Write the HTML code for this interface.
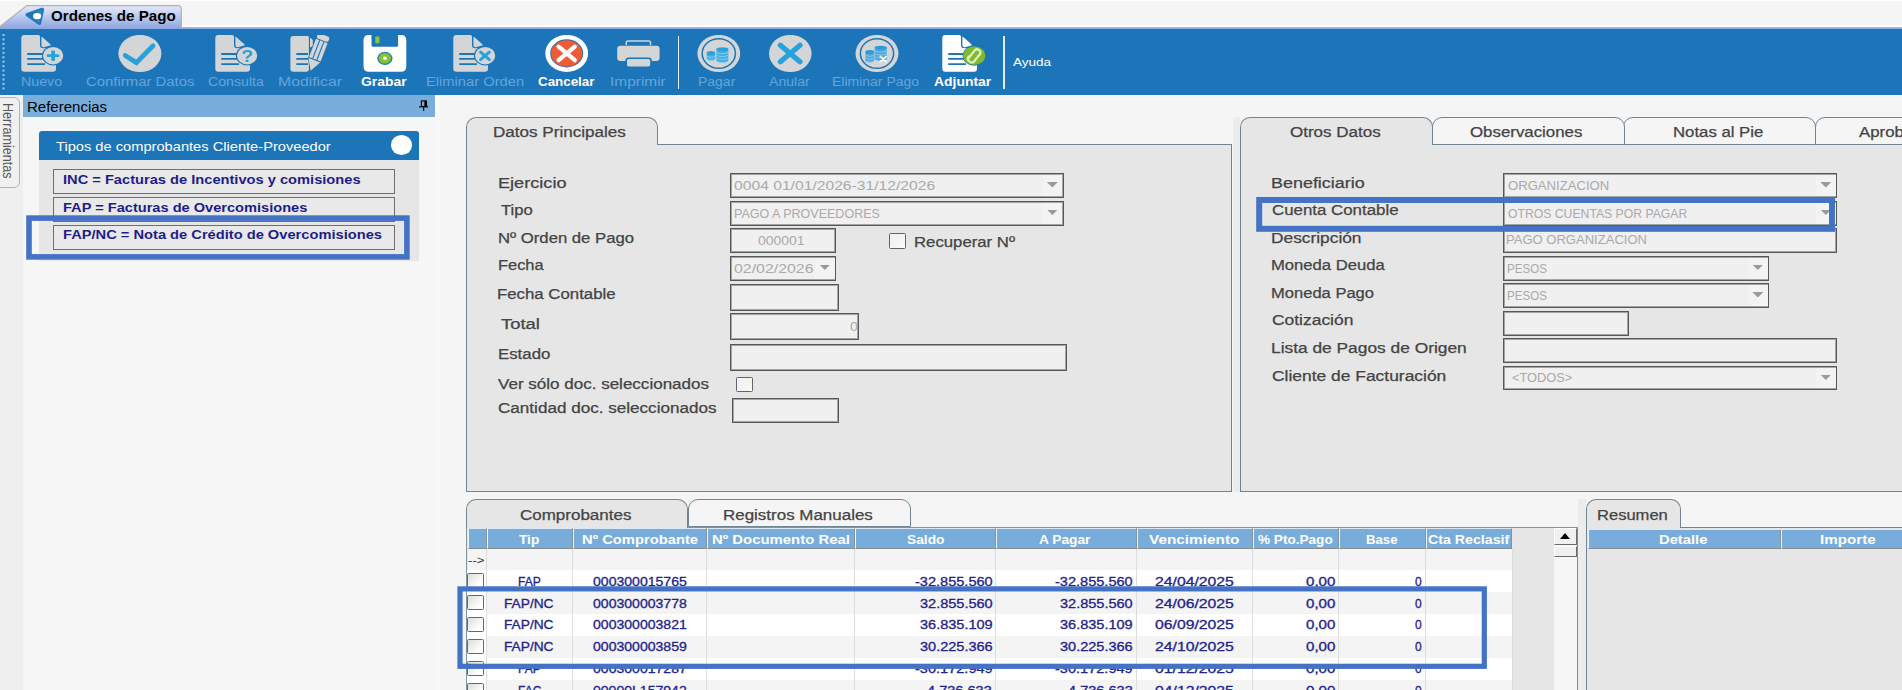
<!DOCTYPE html><html lang="es"><head><meta charset="utf-8"><title>Ordenes de Pago</title><style>
*{box-sizing:border-box;margin:0;padding:0}
html,body{width:1902px;height:690px;overflow:hidden;background:#f5f5f5}
body{position:relative;font-family:"Liberation Sans", "DejaVu Sans", sans-serif;font-size:13px;color:#3b3b3b}
.a{position:absolute;white-space:nowrap}
.t{transform-origin:0 0}
#topbar{left:0;top:0;width:1902px;height:29px;background:#f5f5f5;border-top:1.6px solid #fff}
#wtab{left:0;top:5px;width:184px;height:24px}
#toolbar{left:0;top:28px;width:1902px;height:66.5px;background:#1c75b8;border-top:1.4px solid #8fa8df}
.ti{top:35px}
.sep{top:35.5px;width:1.8px;height:53px;background:#e3ebf4}
#refhead{left:23.3px;top:95px;width:411.5px;height:22.4px;background:#79aedc}
#herr{left:-1px;top:97px;width:21px;height:91px;border:1px solid #b4b4b4;border-radius:0 6px 6px 0;background:#f0f0f0}
.inp{border:1px solid #575757;box-shadow:inset 0 0 0 1px #a4a4a4;background:#f0f0f0;overflow:hidden}
.grp{background:#e6e6e6;border:1px solid #6f8592}
.tab{background:#e6e6e6;border:1px solid #6f8592;border-bottom:none;border-radius:10px 10px 0 0}
.tab.u{background:#f5f5f5;border-bottom:1px solid #6f8592}
.dd{width:20px;background:#f3f3f3}
.dd:after{content:"";position:absolute;left:4.8px;top:7px;width:11px;height:5.6px;background:#9a9a9a;clip-path:polygon(0 0,100% 0,50% 100%)}
.gh{background:#78addb;border-left:1px solid #eef4fa;border-top:1px solid #dbe8f4;border-right:1px solid #8a9096;border-bottom:1px solid #858c92}
.cb.fc{border:1.7px solid #5a6672;background:linear-gradient(135deg,#eef1f3,#f7f3f0 60%,#fbfbfb)}
.cb{border:1.5px solid #41709a;border-radius:1.5px;background:linear-gradient(135deg,#dcdcd8,#ffffff 75%)}
</style></head><body>
<div class="a" id="topbar"></div>
<svg class="a" id="wtab" viewBox="0 0 184 24"><defs><linearGradient id="tg" x1="0" y1="0" x2="0" y2="1"><stop offset="0" stop-color="#e3eafa"/><stop offset="0.45" stop-color="#bccbf0"/><stop offset="1" stop-color="#8ca5e1"/></linearGradient><linearGradient id="lg" x1="0" y1="0" x2="1" y2="0"><stop offset="0" stop-color="#1b6aab"/><stop offset="1" stop-color="#2c8ec6"/></linearGradient></defs>
<path d="M-1 24 V22.2 L26.8 0.6 H177.5 Q181.3 0.6 181.3 4.4 V24 Z" fill="url(#tg)" stroke="#b0b0b0" stroke-width="1.2"/>
<path d="M27.4 9.8 L42.2 4.6 L39.3 18 Z" fill="url(#lg)" stroke="#2279b6" stroke-width="3.8" stroke-linejoin="round"/><path d="M27.4 9.8 L42.2 4.6 L39.3 18 Z" fill="url(#lg)"/><ellipse cx="37.1" cy="11.1" rx="4.1" ry="3.2" fill="#fff"/></svg>
<div class="a t" style="left:50.60px;top:7.05px;font-size:14px;line-height:18px;color:#000;transform:scaleX(1.0838);font-weight:bold;">Ordenes de Pago</div>
<div class="a" style="left:182px;top:25.4px;width:1720px;height:1.8px;background:#fff"></div><div class="a" style="left:182px;top:27px;width:1720px;height:1px;background:#b4b4b4"></div>
<div class="a" id="toolbar"></div>
<svg class="a" style="left:2px;top:33px" width="4" height="58" viewBox="0 0 4 58"><rect x="0.5" y="1.00" width="2" height="2" fill="#a5c6e6"/><rect x="0.5" y="5.45" width="2" height="2" fill="#a5c6e6"/><rect x="0.5" y="9.90" width="2" height="2" fill="#a5c6e6"/><rect x="0.5" y="14.35" width="2" height="2" fill="#a5c6e6"/><rect x="0.5" y="18.80" width="2" height="2" fill="#a5c6e6"/><rect x="0.5" y="23.25" width="2" height="2" fill="#a5c6e6"/><rect x="0.5" y="27.70" width="2" height="2" fill="#a5c6e6"/><rect x="0.5" y="32.15" width="2" height="2" fill="#a5c6e6"/><rect x="0.5" y="36.60" width="2" height="2" fill="#a5c6e6"/><rect x="0.5" y="41.05" width="2" height="2" fill="#a5c6e6"/><rect x="0.5" y="45.50" width="2" height="2" fill="#a5c6e6"/><rect x="0.5" y="49.95" width="2" height="2" fill="#a5c6e6"/><rect x="0.5" y="54.40" width="2" height="2" fill="#a5c6e6"/></svg>
<div class="a ti" style="left:21px"><svg width="46" height="38" viewBox="0 0 46 38">
<path d="M3.3 0 H17.3 Q19 0 19 1.7 V10 Q19 13.2 22.2 13.2 H35 V33.8 Q35 36.8 32 36.8 H3.3 Q0.3 36.8 0.3 33.8 V3 Q0.3 0 3.3 0 Z" fill="#d4d5d7"/>
<path d="M20.4 2.6 Q20.4 1.2 21.5 2.2 L29.6 9.4 Q30.4 10.3 29.2 10.6 L23 12.3 Q20.4 12.6 20.4 10 Z" fill="#d4d5d7"/>
<path d="M6.2 19 H24 M6.2 23.9 H24 M6.2 29.1 H24" stroke="#1c75b8" stroke-width="1.8"/>
<ellipse cx="32.1" cy="20.7" rx="11.2" ry="9.7" fill="#1c75b8"/>
<ellipse cx="32.1" cy="20.7" rx="10.1" ry="8.7" fill="#d4d5d7"/>
<rect x="25.7" y="19.3" width="12.8" height="2.8" rx="1.3" fill="#27a3dc"/><rect x="30.2" y="15.4" width="3.8" height="10.6" rx="1.3" fill="#27a3dc"/>
</svg></div>
<div class="a t" style="left:20.86px;top:73.57px;font-size:12.5px;line-height:16px;color:#64a5dc;transform:scaleX(1.1370);">Nuevo</div>
<div class="a ti" style="left:118px"><svg width="46" height="38" viewBox="0 0 46 38">
<ellipse cx="21.9" cy="18.5" rx="21.5" ry="18.6" fill="#d4d5d7"/>
<path d="M7.2 20.4 L18.4 27.6 L35 10.8" stroke="#27a3dc" stroke-width="4.8" fill="none" stroke-linecap="round" stroke-linejoin="miter"/>
</svg></div>
<div class="a t" style="left:85.80px;top:73.57px;font-size:12.5px;line-height:16px;color:#64a5dc;transform:scaleX(1.1923);">Confirmar Datos</div>
<div class="a ti" style="left:215px"><svg width="46" height="38" viewBox="0 0 46 38">
<path d="M3.3 0 H17.3 Q19 0 19 1.7 V10 Q19 13.2 22.2 13.2 H35 V33.8 Q35 36.8 32 36.8 H3.3 Q0.3 36.8 0.3 33.8 V3 Q0.3 0 3.3 0 Z" fill="#d4d5d7"/>
<path d="M20.4 2.6 Q20.4 1.2 21.5 2.2 L29.6 9.4 Q30.4 10.3 29.2 10.6 L23 12.3 Q20.4 12.6 20.4 10 Z" fill="#d4d5d7"/>
<path d="M6.2 19 H24 M6.2 23.9 H24 M6.2 29.1 H24" stroke="#1c75b8" stroke-width="1.8"/>
<ellipse cx="32.1" cy="20.7" rx="11.2" ry="9.7" fill="#1c75b8"/>
<ellipse cx="32.1" cy="20.7" rx="10.1" ry="8.7" fill="#d4d5d7"/>
<text x="0" y="0" transform="translate(32.1 26.6) scale(1.15 1)" font-family="Liberation Sans, sans-serif" font-weight="bold" font-size="17" fill="#27a3dc" text-anchor="middle">?</text>
</svg></div>
<div class="a t" style="left:208.00px;top:73.57px;font-size:12.5px;line-height:16px;color:#64a5dc;transform:scaleX(1.1340);">Consulta</div>
<div class="a ti" style="left:288px"><svg width="46" height="38" viewBox="0 0 46 38">
<path d="M5.4 0.9 H19.5 Q20.9 0.9 20.9 2.3 V34 Q20.9 36.8 18 36.8 H5.4 Q2.4 36.8 2.4 33.8 V3.9 Q2.4 0.9 5.4 0.9 Z" fill="#d4d5d7"/>
<path d="M22 3.6 Q22 2.6 23 3.3 L24.8 5 L24.8 11 L22 12.4 Z" fill="#d4d5d7"/>
<path d="M8.3 19 H20 M8.3 23.9 H20 M8.3 29.1 H20" stroke="#1c75b8" stroke-width="1.8"/>
<g transform="translate(35.5,1.6) rotate(21)" stroke="#1c75b8" stroke-width="1.2" paint-order="stroke">
<rect x="-6.2" y="-1.6" width="12.4" height="5.4" rx="2" fill="#d4d5d7"/>
<rect x="-6.2" y="4.8" width="12.4" height="19.4" fill="#d4d5d7"/>
<path d="M-6.2 25.4 H6.2 L0.2 36.4 Z" fill="#d4d5d7"/>
<path d="M-2.2 4.8 V24.2 M2.2 4.8 V24.2" stroke="#1c75b8" stroke-width="1.1"/>
</g>
</svg></div>
<div class="a t" style="left:277.74px;top:73.57px;font-size:12.5px;line-height:16px;color:#64a5dc;transform:scaleX(1.2615);">Modificar</div>
<div class="a ti" style="left:362.5px"><svg width="46" height="38" viewBox="0 0 46 38">
<path d="M6 -0.1 H8.5 V10.2 Q8.5 11.7 10 11.7 H33.6 Q35.1 11.7 35.1 10.2 V-0.1 H37.8 Q43.3 -0.1 43.3 5.4 V31.3 Q43.3 36.8 37.8 36.8 H6 Q0.5 36.8 0.5 31.3 V5.4 Q0.5 -0.1 6 -0.1 Z" fill="#ffffff"/>
<rect x="12.3" y="1.6" width="4.2" height="6.6" rx="0.8" fill="#8cc63f"/>
<ellipse cx="21.9" cy="23.3" rx="7.6" ry="6.6" fill="#2a7fae"/>
<ellipse cx="21.9" cy="23.3" rx="6.2" ry="5.3" fill="#86c232"/>
<ellipse cx="21.9" cy="23.3" rx="2" ry="1.7" fill="#ffffff"/>
</svg></div>
<div class="a t" style="left:360.70px;top:73.57px;font-size:12.5px;line-height:16px;color:#ffffff;transform:scaleX(1.1136);font-weight:bold;">Grabar</div>
<div class="a ti" style="left:453.4px"><svg width="46" height="38" viewBox="0 0 46 38">
<path d="M3.3 0 H17.3 Q19 0 19 1.7 V10 Q19 13.2 22.2 13.2 H35 V33.8 Q35 36.8 32 36.8 H3.3 Q0.3 36.8 0.3 33.8 V3 Q0.3 0 3.3 0 Z" fill="#d4d5d7"/>
<path d="M20.4 2.6 Q20.4 1.2 21.5 2.2 L29.6 9.4 Q30.4 10.3 29.2 10.6 L23 12.3 Q20.4 12.6 20.4 10 Z" fill="#d4d5d7"/>
<path d="M6.2 19 H24 M6.2 23.9 H24 M6.2 29.1 H24" stroke="#1c75b8" stroke-width="1.8"/>
<ellipse cx="32.1" cy="20.7" rx="11.2" ry="9.7" fill="#1c75b8"/>
<ellipse cx="32.1" cy="20.7" rx="10.1" ry="8.7" fill="#d4d5d7"/>
<path d="M27.6 17.2 L36.4 24.6 M36.4 17.2 L27.6 24.6" stroke="#27a3dc" stroke-width="3" stroke-linecap="round"/>
</svg></div>
<div class="a t" style="left:425.82px;top:73.57px;font-size:12.5px;line-height:16px;color:#64a5dc;transform:scaleX(1.1770);">Eliminar Orden</div>
<div class="a ti" style="left:544px"><svg width="46" height="38" viewBox="0 0 46 38">
<ellipse cx="22.7" cy="18.4" rx="21.4" ry="18.5" fill="#ffffff"/>
<ellipse cx="22.7" cy="18.4" rx="16.5" ry="14.1" fill="#1c75b8"/>
<ellipse cx="22.7" cy="18.4" rx="15.6" ry="13.2" fill="#ef5b35"/>
<path d="M14.6 11.6 L30.8 25.2 M30.8 11.6 L14.6 25.2" stroke="#ffffff" stroke-width="4.2" stroke-linecap="round"/>
</svg></div>
<div class="a t" style="left:538.40px;top:73.57px;font-size:12.5px;line-height:16px;color:#ffffff;transform:scaleX(1.0691);font-weight:bold;">Cancelar</div>
<div class="a ti" style="left:617px"><svg width="46" height="38" viewBox="0 0 46 38">
<path d="M9.3 10 V7.6 Q9.3 6 11 6 H31.8 Q33.5 6 33.5 7.6 V10" fill="none" stroke="#d4d5d7" stroke-width="1.5"/>
<rect x="0.2" y="10.7" width="42.4" height="15.3" rx="3.2" fill="#d4d5d7"/>
<rect x="9.2" y="23.2" width="24.8" height="9" rx="2.4" fill="#d4d5d7" stroke="#1c75b8" stroke-width="1.6"/>
</svg></div>
<div class="a t" style="left:610.06px;top:73.57px;font-size:12.5px;line-height:16px;color:#64a5dc;transform:scaleX(1.2350);">Imprimir</div>
<div class="a ti" style="left:696.5px"><svg width="46" height="38" viewBox="0 0 46 38">
<ellipse cx="21.8" cy="18.5" rx="21.4" ry="18.6" fill="#d4d5d7"/>
<ellipse cx="21.8" cy="18.5" rx="16.6" ry="14.8" fill="none" stroke="#1c75b8" stroke-width="1.5"/>
<ellipse cx="14" cy="23.80" rx="4.3" ry="1.9" fill="#43ade2"/><rect x="9.7" y="18.00" width="8.6" height="5.80" fill="#43ade2"/><path d="M9.7 20.60 A4.3 1.9 0 0 0 18.3 20.60" fill="none" stroke="#bfe0f3" stroke-width="0.55"/><path d="M9.7 23.50 A4.3 1.9 0 0 0 18.3 23.50" fill="none" stroke="#bfe0f3" stroke-width="0.55"/><ellipse cx="14" cy="18.00" rx="4.3" ry="1.9" fill="#27a3dc"/>
<ellipse cx="25.4" cy="25.80" rx="6" ry="1.9" fill="#43ade2"/><rect x="19.4" y="14.20" width="12" height="11.60" fill="#43ade2"/><path d="M19.4 16.80 A6 1.9 0 0 0 31.4 16.80" fill="none" stroke="#bfe0f3" stroke-width="0.55"/><path d="M19.4 19.70 A6 1.9 0 0 0 31.4 19.70" fill="none" stroke="#bfe0f3" stroke-width="0.55"/><path d="M19.4 22.60 A6 1.9 0 0 0 31.4 22.60" fill="none" stroke="#bfe0f3" stroke-width="0.55"/><path d="M19.4 25.50 A6 1.9 0 0 0 31.4 25.50" fill="none" stroke="#bfe0f3" stroke-width="0.55"/><ellipse cx="25.4" cy="14.20" rx="6" ry="1.9" fill="#27a3dc"/>
</svg></div>
<div class="a t" style="left:697.88px;top:73.57px;font-size:12.5px;line-height:16px;color:#64a5dc;transform:scaleX(1.1183);">Pagar</div>
<div class="a ti" style="left:768px"><svg width="46" height="38" viewBox="0 0 46 38">
<ellipse cx="22.3" cy="18.5" rx="21.3" ry="18.6" fill="#d4d5d7"/>
<path d="M12.4 10.2 L32 26.8 M32 10.2 L12.4 26.8" stroke="#27a3dc" stroke-width="5.2" stroke-linecap="round"/>
</svg></div>
<div class="a t" style="left:769.00px;top:73.57px;font-size:12.5px;line-height:16px;color:#64a5dc;transform:scaleX(1.1287);">Anular</div>
<div class="a ti" style="left:854.5px"><svg width="46" height="38" viewBox="0 0 46 38">
<ellipse cx="22" cy="18.5" rx="21.5" ry="18.6" fill="#d4d5d7"/>
<ellipse cx="22" cy="18.5" rx="16.6" ry="14.8" fill="none" stroke="#1c75b8" stroke-width="1.5"/>
<ellipse cx="14.8" cy="25.50" rx="4.4" ry="1.9" fill="#4aa6dc"/><rect x="10.4" y="16.80" width="8.8" height="8.70" fill="#4aa6dc"/><path d="M10.4 19.40 A4.4 1.9 0 0 0 19.200000000000003 19.40" fill="none" stroke="#bfe0f3" stroke-width="0.55"/><path d="M10.4 22.30 A4.4 1.9 0 0 0 19.200000000000003 22.30" fill="none" stroke="#bfe0f3" stroke-width="0.55"/><path d="M10.4 25.20 A4.4 1.9 0 0 0 19.200000000000003 25.20" fill="none" stroke="#bfe0f3" stroke-width="0.55"/><ellipse cx="14.8" cy="16.80" rx="4.4" ry="1.9" fill="#2e9bd6"/>
<ellipse cx="25.7" cy="24.20" rx="6.1" ry="1.9" fill="#4aa6dc"/><rect x="19.6" y="12.60" width="12.2" height="11.60" fill="#4aa6dc"/><path d="M19.6 15.20 A6.1 1.9 0 0 0 31.799999999999997 15.20" fill="none" stroke="#bfe0f3" stroke-width="0.55"/><path d="M19.6 18.10 A6.1 1.9 0 0 0 31.799999999999997 18.10" fill="none" stroke="#bfe0f3" stroke-width="0.55"/><path d="M19.6 21.00 A6.1 1.9 0 0 0 31.799999999999997 21.00" fill="none" stroke="#bfe0f3" stroke-width="0.55"/><path d="M19.6 23.90 A6.1 1.9 0 0 0 31.799999999999997 23.90" fill="none" stroke="#bfe0f3" stroke-width="0.55"/><ellipse cx="25.7" cy="12.60" rx="6.1" ry="1.9" fill="#2e9bd6"/>
<path d="M25.4 21.6 L31 26.6 M31 21.6 L25.4 26.6" stroke="#ffffff" stroke-width="1.9" stroke-linecap="round"/>
</svg></div>
<div class="a t" style="left:831.88px;top:73.57px;font-size:12.5px;line-height:16px;color:#64a5dc;transform:scaleX(1.1189);">Eliminar Pago</div>
<div class="a ti" style="left:941.5px"><svg width="46" height="38" viewBox="0 0 46 38">
<path d="M3.3 0 H17.3 Q19 0 19 1.7 V10 Q19 13.2 22.2 13.2 H35 V33.8 Q35 36.8 32 36.8 H3.3 Q0.3 36.8 0.3 33.8 V3 Q0.3 0 3.3 0 Z" fill="#ffffff"/>
<path d="M20.4 2.6 Q20.4 1.2 21.5 2.2 L29.6 9.4 Q30.4 10.3 29.2 10.6 L23 12.3 Q20.4 12.6 20.4 10 Z" fill="#ffffff"/>
<path d="M6.2 19 H24 M6.2 23.9 H24 M6.2 29.1 H24" stroke="#1c75b8" stroke-width="1.8"/>
<ellipse cx="32.2" cy="20.7" rx="11.6" ry="10" fill="#1c75b8"/>
<ellipse cx="32.2" cy="20.7" rx="11" ry="9.4" fill="#7fba2c"/>
<g transform="translate(32.2,20.7) rotate(38) scale(1.1 1)">
<path d="M-2.6 5 V-4.2 Q-2.6 -7.4 0.3 -7.4 Q3.2 -7.4 3.2 -4.2 V4 Q3.2 7.6 0 7.6 Q-3.4 7.6 -3.4 4" stroke="#d9efbc" stroke-width="2.2" fill="none" stroke-linecap="round"/>
<path d="M0.3 -3.5 V3.6" stroke="#7fba2c" stroke-width="0.9"/>
</g>
</svg></div>
<div class="a t" style="left:934.40px;top:73.57px;font-size:12.5px;line-height:16px;color:#ffffff;transform:scaleX(1.1141);font-weight:bold;">Adjuntar</div>
<div class="a sep" style="left:677.6px"></div><div class="a sep" style="left:1002.8px"></div>
<div class="a t" style="left:1012.80px;top:54.69px;font-size:11px;line-height:14px;color:#ffffff;transform:scaleX(1.2299);">Ayuda</div>
<div class="a" style="left:0;top:95px;width:434.8px;height:595px;background:#f6f6f6"></div><div class="a" style="left:434.8px;top:95px;width:5.5px;height:595px;background:#f8f8f8"></div>
<div class="a" style="left:0;top:95px;width:22.6px;height:595px;background:#efefef"></div>
<div class="a" id="herr"></div>
<div class="a" style="left:16.9px;top:102.63px;font-size:13px;color:#5a5a5a;transform-origin:0 0;transform:scale(1.16,1) rotate(90deg) scale(0.9674,1);line-height:16px">Herramientas</div>
<div class="a" id="refhead"></div>
<div class="a t" style="left:26.93px;top:98.15px;font-size:14px;line-height:18px;color:#000;transform:scaleX(1.0719);">Referencias</div>
<svg class="a" style="left:419px;top:100px" width="10" height="12" viewBox="0 0 10 12"><rect x="2.4" y="0.9" width="4.9" height="5.6" fill="none" stroke="#000" stroke-width="1.1"/><rect x="5.4" y="0.9" width="2.2" height="5.6" fill="#000"/><rect x="0.1" y="6.2" width="9" height="1.2" fill="#000"/><rect x="4.1" y="7.2" width="1.1" height="3.8" fill="#000"/></svg>
<div class="a" style="left:38.5px;top:131px;width:380.5px;height:129.6px;background:#e6e6e6;border-radius:3px 3px 0 0"></div>
<div class="a" style="left:38.5px;top:131px;width:380.5px;height:28.8px;background:#1c75b8;border-radius:3px 3px 0 0"></div>
<div class="a t" style="left:56.30px;top:138.30px;font-size:13px;line-height:17px;color:#ffffff;transform:scaleX(1.1271);">Tipos de comprobantes Cliente-Proveedor</div>
<div class="a" style="left:391.3px;top:135px;width:21.2px;height:19.6px;border-radius:50%;background:#fff"></div>
<div class="a" style="left:53px;top:169.3px;width:342px;height:25px;border:1.5px solid #6e6e6e;background:#e9e9e9"></div>
<div class="a t" style="left:62.60px;top:172.17px;font-size:12.5px;line-height:16px;color:#1d1d8a;transform:scaleX(1.1719);font-weight:bold;">INC = Facturas de Incentivos y comisiones</div>
<div class="a" style="left:53px;top:197.1px;width:342px;height:25px;border:1.5px solid #6e6e6e;background:#e9e9e9"></div>
<div class="a t" style="left:62.60px;top:199.72px;font-size:12.5px;line-height:16px;color:#1d1d8a;transform:scaleX(1.1675);font-weight:bold;">FAP = Facturas de Overcomisiones</div>
<div class="a" style="left:53px;top:224.9px;width:342px;height:25px;border:1.5px solid #6e6e6e;background:#e9e9e9"></div>
<div class="a t" style="left:62.60px;top:227.27px;font-size:12.5px;line-height:16px;color:#1d1d8a;transform:scaleX(1.1728);font-weight:bold;">FAP/NC = Nota de Crédito de Overcomisiones</div>
<svg class="a" style="left:25px;top:214px" width="386" height="47" viewBox="0 0 386 47"><rect x="4.00" y="4.10" width="377.90" height="38.80" fill="none" stroke="#4472c4" stroke-width="5.6"/></svg>
<div class="a grp" style="left:466px;top:144px;width:766px;height:348px"></div>
<div class="a tab" style="left:466px;top:117px;width:192px;height:28px"></div>
<div class="a t" style="left:493.18px;top:123.15px;font-size:14px;line-height:18px;color:#444444;transform:scaleX(1.2192);-webkit-text-stroke:0.25px #444;">Datos Principales</div>
<div class="a t" style="left:497.70px;top:174.05px;font-size:14px;line-height:18px;color:#444444;transform:scaleX(1.2952);-webkit-text-stroke:0.25px #444;">Ejercicio</div>
<div class="a t" style="left:501.30px;top:201.35px;font-size:14px;line-height:18px;color:#444444;transform:scaleX(1.1883);-webkit-text-stroke:0.25px #444;">Tipo</div>
<div class="a t" style="left:497.81px;top:228.65px;font-size:14px;line-height:18px;color:#444444;transform:scaleX(1.1926);-webkit-text-stroke:0.25px #444;">Nº Orden de Pago</div>
<div class="a t" style="left:497.83px;top:256.05px;font-size:14px;line-height:18px;color:#444444;transform:scaleX(1.1725);-webkit-text-stroke:0.25px #444;">Fecha</div>
<div class="a t" style="left:496.60px;top:284.65px;font-size:14px;line-height:18px;color:#444444;transform:scaleX(1.1993);-webkit-text-stroke:0.25px #444;">Fecha Contable</div>
<div class="a t" style="left:500.50px;top:314.75px;font-size:14px;line-height:18px;color:#444444;transform:scaleX(1.3170);-webkit-text-stroke:0.25px #444;">Total</div>
<div class="a t" style="left:497.90px;top:344.55px;font-size:14px;line-height:18px;color:#444444;transform:scaleX(1.2009);-webkit-text-stroke:0.25px #444;">Estado</div>
<div class="a t" style="left:497.70px;top:374.65px;font-size:14px;line-height:18px;color:#444444;transform:scaleX(1.2158);-webkit-text-stroke:0.25px #444;">Ver sólo doc. seleccionados</div>
<div class="a t" style="left:498.10px;top:398.95px;font-size:14px;line-height:18px;color:#444444;transform:scaleX(1.2206);-webkit-text-stroke:0.25px #444;">Cantidad doc. seleccionados</div>
<div class="a inp" style="left:730px;top:173px;width:333.5px;height:25px"><div class="a dd" style="left:311.0px;top:1px;height:21px"></div></div>
<div class="a t" style="left:734.00px;top:177.00px;font-size:13px;line-height:17px;color:#a9a9a9;transform:scaleX(1.2047);">0004 01/01/2026-31/12/2026</div>
<div class="a inp" style="left:730px;top:200.5px;width:333.5px;height:25px"><div class="a dd" style="left:311.0px;top:1px;height:21px"></div></div>
<div class="a t" style="left:733.64px;top:204.50px;font-size:13px;line-height:17px;color:#a9a9a9;transform:scaleX(0.9630);">PAGO A PROVEEDORES</div>
<div class="a inp" style="left:730px;top:228px;width:106px;height:25px"></div>
<div class="a t" style="left:758.10px;top:232.00px;font-size:13px;line-height:17px;color:#a9a9a9;transform:scaleX(1.0753);">000001</div>
<div class="a inp" style="left:730px;top:255.5px;width:106px;height:25px"><div class="a dd" style="left:83.5px;top:1px;height:21px"></div></div>
<div class="a t" style="left:733.50px;top:259.50px;font-size:13px;line-height:17px;color:#a9a9a9;transform:scaleX(1.2216);">02/02/2026</div>
<div class="a inp" style="left:730px;top:283.5px;width:109px;height:27px"></div>
<div class="a inp" style="left:730px;top:313px;width:129px;height:27px"></div>
<div class="a t" style="left:849.70px;top:318.00px;font-size:13px;line-height:17px;color:#a9a9a9;transform:scaleX(1.0857);">0</div>
<div class="a inp" style="left:730px;top:344px;width:337px;height:27px"></div>
<div class="a inp" style="left:731.5px;top:398px;width:107px;height:25px"></div>
<div class="a cb fc" style="left:735.6px;top:376.6px;width:17.6px;height:15.2px"></div>
<div class="a cb fc" style="left:888.5px;top:233.3px;width:17.6px;height:15.4px"></div>
<div class="a t" style="left:914.00px;top:233.45px;font-size:14px;line-height:18px;color:#444444;transform:scaleX(1.1959);-webkit-text-stroke:0.25px #444;">Recuperar Nº</div>
<div class="a" style="left:1233px;top:117px;width:7px;height:375px;background:#ececec"></div>
<div class="a grp" style="left:1240px;top:144px;width:700px;height:348px"></div>
<div class="a tab u" style="left:1815px;top:117px;width:193px;height:28px"></div>
<div class="a t" style="left:1859.00px;top:123.15px;font-size:14px;line-height:18px;color:#444444;transform:scaleX(1.2000);-webkit-text-stroke:0.25px #444;">Aprobaciones</div>
<div class="a tab u" style="left:1623px;top:117px;width:193px;height:28px"></div>
<div class="a t" style="left:1673.00px;top:123.15px;font-size:14px;line-height:18px;color:#444444;transform:scaleX(1.1968);-webkit-text-stroke:0.25px #444;">Notas al Pie</div>
<div class="a tab u" style="left:1431.5px;top:117px;width:193px;height:28px"></div>
<div class="a t" style="left:1470.30px;top:123.15px;font-size:14px;line-height:18px;color:#444444;transform:scaleX(1.2037);-webkit-text-stroke:0.25px #444;">Observaciones</div>
<div class="a tab " style="left:1240px;top:117px;width:193px;height:28px"></div>
<div class="a t" style="left:1289.70px;top:123.15px;font-size:14px;line-height:18px;color:#444444;transform:scaleX(1.2144);-webkit-text-stroke:0.25px #444;">Otros Datos</div>
<div class="a t" style="left:1270.72px;top:174.05px;font-size:14px;line-height:18px;color:#444444;transform:scaleX(1.2810);-webkit-text-stroke:0.25px #444;">Beneficiario</div>
<div class="a t" style="left:1272.40px;top:201.35px;font-size:14px;line-height:18px;color:#444444;transform:scaleX(1.2043);-webkit-text-stroke:0.25px #444;">Cuenta Contable</div>
<div class="a t" style="left:1270.76px;top:228.65px;font-size:14px;line-height:18px;color:#444444;transform:scaleX(1.2375);-webkit-text-stroke:0.25px #444;">Descripción</div>
<div class="a t" style="left:1270.81px;top:256.05px;font-size:14px;line-height:18px;color:#444444;transform:scaleX(1.1880);-webkit-text-stroke:0.25px #444;">Moneda Deuda</div>
<div class="a t" style="left:1270.82px;top:283.55px;font-size:14px;line-height:18px;color:#444444;transform:scaleX(1.1818);-webkit-text-stroke:0.25px #444;">Moneda Pago</div>
<div class="a t" style="left:1272.40px;top:311.25px;font-size:14px;line-height:18px;color:#444444;transform:scaleX(1.2450);-webkit-text-stroke:0.25px #444;">Cotización</div>
<div class="a t" style="left:1270.76px;top:338.95px;font-size:14px;line-height:18px;color:#444444;transform:scaleX(1.2387);-webkit-text-stroke:0.25px #444;">Lista de Pagos de Origen</div>
<div class="a t" style="left:1272.40px;top:366.65px;font-size:14px;line-height:18px;color:#444444;transform:scaleX(1.2442);-webkit-text-stroke:0.25px #444;">Cliente de Facturación</div>
<div class="a inp" style="left:1503px;top:173px;width:334px;height:25px"><div class="a dd" style="left:311.5px;top:1px;height:21px"></div></div>
<div class="a t" style="left:1508.00px;top:177.00px;font-size:13px;line-height:17px;color:#a9a9a9;transform:scaleX(1.0079);">ORGANIZACION</div>
<div class="a inp" style="left:1503px;top:200.5px;width:334px;height:25px"><div class="a dd" style="left:311.5px;top:1px;height:21px"></div></div>
<div class="a t" style="left:1508.00px;top:204.50px;font-size:13px;line-height:17px;color:#a9a9a9;transform:scaleX(0.9389);">OTROS CUENTAS POR PAGAR</div>
<div class="a inp" style="left:1503px;top:228px;width:334px;height:25px"></div>
<div class="a t" style="left:1505.70px;top:230.90px;font-size:13px;line-height:17px;color:#a9a9a9;transform:scaleX(1.0027);">PAGO ORGANIZACION</div>
<div class="a inp" style="left:1503px;top:255.5px;width:266px;height:25px"><div class="a dd" style="left:243.5px;top:1px;height:21px"></div></div>
<div class="a t" style="left:1507.11px;top:259.50px;font-size:13px;line-height:17px;color:#a9a9a9;transform:scaleX(0.8907);">PESOS</div>
<div class="a inp" style="left:1503px;top:283px;width:266px;height:25px"><div class="a dd" style="left:243.5px;top:1px;height:21px"></div></div>
<div class="a t" style="left:1507.11px;top:287.00px;font-size:13px;line-height:17px;color:#a9a9a9;transform:scaleX(0.8907);">PESOS</div>
<div class="a inp" style="left:1503px;top:311px;width:126px;height:25px"></div>
<div class="a inp" style="left:1503px;top:338px;width:334px;height:25px"></div>
<div class="a inp" style="left:1503px;top:365.5px;width:334px;height:24.5px"><div class="a dd" style="left:311.5px;top:1px;height:20.5px"></div></div>
<div class="a t" style="left:1512.00px;top:369.00px;font-size:13px;line-height:17px;color:#a9a9a9;transform:scaleX(0.9855);">&lt;TODOS&gt;</div>
<svg class="a" style="left:1255px;top:196px" width="581" height="37" viewBox="0 0 581 37"><rect x="4.20" y="4.00" width="572.80" height="28.80" fill="none" stroke="#4472c4" stroke-width="6"/></svg>
<div class="a" style="left:466px;top:527px;width:1112px;height:170px;background:#e6e6e6;border-left:1px solid #8096a2;border-top:1px solid #8096a2"></div>
<div class="a tab u" style="left:688px;top:499px;width:223px;height:28px"></div>
<div class="a tab" style="left:466px;top:499px;width:222px;height:29px"></div>
<div class="a t" style="left:520.30px;top:506.15px;font-size:14px;line-height:18px;color:#444444;transform:scaleX(1.2131);-webkit-text-stroke:0.25px #444;">Comprobantes</div>
<div class="a t" style="left:722.59px;top:506.15px;font-size:14px;line-height:18px;color:#444444;transform:scaleX(1.2109);-webkit-text-stroke:0.25px #444;">Registros Manuales</div>
<div class="a" style="left:468px;top:549px;width:1044px;height:141px;background:#fff"></div>
<div class="a" style="left:468px;top:548.5px;width:1044px;height:21.7px;background:#f4f4f4"></div>
<div class="a" style="left:468px;top:592.1px;width:1044px;height:21.9px;background:#f4f4f4"></div>
<div class="a" style="left:468px;top:635.9px;width:1044px;height:21.9px;background:#f4f4f4"></div>
<div class="a" style="left:468px;top:679.7px;width:1044px;height:21.9px;background:#f4f4f4"></div>
<div class="a" style="left:467px;top:570.3px;width:19.5px;height:120px;background:#fff"></div>
<div class="a gh" style="left:468px;top:528px;width:18.5px;height:20.5px;overflow:hidden"></div>
<div class="a gh" style="left:486.5px;top:528px;width:86.0px;height:20.5px;overflow:hidden"><div class="a t" style="left:31.40px;top:2.57px;font-size:12.5px;line-height:16px;color:#fff;transform:scaleX(1.0962);font-weight:bold;">Tip</div></div>
<div class="a" style="left:485.8px;top:549px;width:1px;height:141px;background:#dedede"></div>
<div class="a gh" style="left:572.5px;top:528px;width:134.0px;height:20.5px;overflow:hidden"><div class="a t" style="left:8.30px;top:2.57px;font-size:12.5px;line-height:16px;color:#fff;transform:scaleX(1.1803);font-weight:bold;">Nº Comprobante</div></div>
<div class="a" style="left:571.8px;top:549px;width:1px;height:141px;background:#dedede"></div>
<div class="a gh" style="left:706.5px;top:528px;width:148.0px;height:20.5px;overflow:hidden"><div class="a t" style="left:4.50px;top:2.57px;font-size:12.5px;line-height:16px;color:#fff;transform:scaleX(1.1916);font-weight:bold;">Nº Documento Real</div></div>
<div class="a" style="left:705.8px;top:549px;width:1px;height:141px;background:#dedede"></div>
<div class="a gh" style="left:854.5px;top:528px;width:141.5px;height:20.5px;overflow:hidden"><div class="a t" style="left:51.20px;top:2.57px;font-size:12.5px;line-height:16px;color:#fff;transform:scaleX(1.1018);font-weight:bold;">Saldo</div></div>
<div class="a" style="left:853.8px;top:549px;width:1px;height:141px;background:#dedede"></div>
<div class="a gh" style="left:996px;top:528px;width:140.5px;height:20.5px;overflow:hidden"><div class="a t" style="left:42.40px;top:2.57px;font-size:12.5px;line-height:16px;color:#fff;transform:scaleX(1.0997);font-weight:bold;">A Pagar</div></div>
<div class="a" style="left:995.3px;top:549px;width:1px;height:141px;background:#dedede"></div>
<div class="a gh" style="left:1136.5px;top:528px;width:116.0px;height:20.5px;overflow:hidden"><div class="a t" style="left:11.40px;top:2.57px;font-size:12.5px;line-height:16px;color:#fff;transform:scaleX(1.2271);font-weight:bold;">Vencimiento</div></div>
<div class="a" style="left:1135.8px;top:549px;width:1px;height:141px;background:#dedede"></div>
<div class="a gh" style="left:1252.5px;top:528px;width:86.5px;height:20.5px;overflow:hidden"><div class="a t" style="left:4.20px;top:2.57px;font-size:12.5px;line-height:16px;color:#fff;transform:scaleX(1.0865);font-weight:bold;">% Pto.Pago</div></div>
<div class="a" style="left:1251.8px;top:549px;width:1px;height:141px;background:#dedede"></div>
<div class="a gh" style="left:1339px;top:528px;width:87px;height:20.5px;overflow:hidden"><div class="a t" style="left:25.90px;top:2.57px;font-size:12.5px;line-height:16px;color:#fff;transform:scaleX(1.0558);font-weight:bold;">Base</div></div>
<div class="a" style="left:1338.3px;top:549px;width:1px;height:141px;background:#dedede"></div>
<div class="a gh" style="left:1426px;top:528px;width:86px;height:20.5px;overflow:hidden"><div class="a t" style="left:1.40px;top:2.57px;font-size:12.5px;line-height:16px;color:#fff;transform:scaleX(1.1354);font-weight:bold;">Cta Reclasif</div></div>
<div class="a" style="left:1425.3px;top:549px;width:1px;height:141px;background:#dedede"></div>
<div class="a" style="left:1512px;top:549px;width:1px;height:141px;background:#dcdcdc"></div>
<div class="a t" style="left:467.70px;top:553.53px;font-size:10px;line-height:13px;color:#333;transform:scaleX(1.3191);">--&gt;</div>
<div class="a cb" style="left:466.7px;top:573.2px;width:17.6px;height:15px;border:1.5px solid #41709a;border-left-width:1.9px;border-radius:1.5px"></div>
<div class="a t" style="left:518.00px;top:573.74px;font-size:12px;line-height:16px;color:#23238a;transform:scaleX(1.0057);-webkit-text-stroke:0.3px #23238a;">FAP</div>
<div class="a t" style="left:592.93px;top:573.74px;font-size:12px;line-height:16px;color:#23238a;transform:scaleX(1.1707);-webkit-text-stroke:0.3px #23238a;">000300015765</div>
<div class="a t" style="left:914.54px;top:573.74px;font-size:12px;line-height:16px;color:#23238a;transform:scaleX(1.2125);-webkit-text-stroke:0.3px #23238a;">-32.855.560</div>
<div class="a t" style="left:1055.34px;top:573.74px;font-size:12px;line-height:16px;color:#23238a;transform:scaleX(1.2125);-webkit-text-stroke:0.3px #23238a;">-32.855.560</div>
<div class="a t" style="left:1154.67px;top:573.74px;font-size:12px;line-height:16px;color:#23238a;transform:scaleX(1.3126);-webkit-text-stroke:0.3px #23238a;">24/04/2025</div>
<div class="a t" style="left:1306.10px;top:573.74px;font-size:12px;line-height:16px;color:#23238a;transform:scaleX(1.2584);-webkit-text-stroke:0.3px #23238a;">0,00</div>
<div class="a t" style="left:1414.98px;top:573.74px;font-size:12px;line-height:16px;color:#23238a;transform:scaleX(1.0029);-webkit-text-stroke:0.3px #23238a;">0</div>
<div class="a cb" style="left:466.7px;top:595.1px;width:17.6px;height:15px;border:1.5px solid #41709a;border-left-width:1.9px;border-radius:1.5px"></div>
<div class="a t" style="left:504.45px;top:595.59px;font-size:12px;line-height:16px;color:#23238a;transform:scaleX(1.1425);-webkit-text-stroke:0.3px #23238a;">FAP/NC</div>
<div class="a t" style="left:592.93px;top:595.59px;font-size:12px;line-height:16px;color:#23238a;transform:scaleX(1.1707);-webkit-text-stroke:0.3px #23238a;">000300003778</div>
<div class="a t" style="left:919.54px;top:595.59px;font-size:12px;line-height:16px;color:#23238a;transform:scaleX(1.2099);-webkit-text-stroke:0.3px #23238a;">32.855.560</div>
<div class="a t" style="left:1060.34px;top:595.59px;font-size:12px;line-height:16px;color:#23238a;transform:scaleX(1.2099);-webkit-text-stroke:0.3px #23238a;">32.855.560</div>
<div class="a t" style="left:1154.67px;top:595.59px;font-size:12px;line-height:16px;color:#23238a;transform:scaleX(1.3126);-webkit-text-stroke:0.3px #23238a;">24/06/2025</div>
<div class="a t" style="left:1306.10px;top:595.59px;font-size:12px;line-height:16px;color:#23238a;transform:scaleX(1.2584);-webkit-text-stroke:0.3px #23238a;">0,00</div>
<div class="a t" style="left:1414.98px;top:595.59px;font-size:12px;line-height:16px;color:#23238a;transform:scaleX(1.0029);-webkit-text-stroke:0.3px #23238a;">0</div>
<div class="a cb" style="left:466.7px;top:617.0px;width:17.6px;height:15px;border:1.5px solid #41709a;border-left-width:1.9px;border-radius:1.5px"></div>
<div class="a t" style="left:504.45px;top:617.44px;font-size:12px;line-height:16px;color:#23238a;transform:scaleX(1.1425);-webkit-text-stroke:0.3px #23238a;">FAP/NC</div>
<div class="a t" style="left:592.93px;top:617.44px;font-size:12px;line-height:16px;color:#23238a;transform:scaleX(1.1707);-webkit-text-stroke:0.3px #23238a;">000300003821</div>
<div class="a t" style="left:919.54px;top:617.44px;font-size:12px;line-height:16px;color:#23238a;transform:scaleX(1.2099);-webkit-text-stroke:0.3px #23238a;">36.835.109</div>
<div class="a t" style="left:1060.34px;top:617.44px;font-size:12px;line-height:16px;color:#23238a;transform:scaleX(1.2099);-webkit-text-stroke:0.3px #23238a;">36.835.109</div>
<div class="a t" style="left:1154.67px;top:617.44px;font-size:12px;line-height:16px;color:#23238a;transform:scaleX(1.3126);-webkit-text-stroke:0.3px #23238a;">06/09/2025</div>
<div class="a t" style="left:1306.10px;top:617.44px;font-size:12px;line-height:16px;color:#23238a;transform:scaleX(1.2584);-webkit-text-stroke:0.3px #23238a;">0,00</div>
<div class="a t" style="left:1414.98px;top:617.44px;font-size:12px;line-height:16px;color:#23238a;transform:scaleX(1.0029);-webkit-text-stroke:0.3px #23238a;">0</div>
<div class="a cb" style="left:466.7px;top:638.9px;width:17.6px;height:15px;border:1.5px solid #41709a;border-left-width:1.9px;border-radius:1.5px"></div>
<div class="a t" style="left:504.45px;top:639.29px;font-size:12px;line-height:16px;color:#23238a;transform:scaleX(1.1425);-webkit-text-stroke:0.3px #23238a;">FAP/NC</div>
<div class="a t" style="left:592.93px;top:639.29px;font-size:12px;line-height:16px;color:#23238a;transform:scaleX(1.1707);-webkit-text-stroke:0.3px #23238a;">000300003859</div>
<div class="a t" style="left:919.54px;top:639.29px;font-size:12px;line-height:16px;color:#23238a;transform:scaleX(1.2099);-webkit-text-stroke:0.3px #23238a;">30.225.366</div>
<div class="a t" style="left:1060.34px;top:639.29px;font-size:12px;line-height:16px;color:#23238a;transform:scaleX(1.2099);-webkit-text-stroke:0.3px #23238a;">30.225.366</div>
<div class="a t" style="left:1154.67px;top:639.29px;font-size:12px;line-height:16px;color:#23238a;transform:scaleX(1.3126);-webkit-text-stroke:0.3px #23238a;">24/10/2025</div>
<div class="a t" style="left:1306.10px;top:639.29px;font-size:12px;line-height:16px;color:#23238a;transform:scaleX(1.2584);-webkit-text-stroke:0.3px #23238a;">0,00</div>
<div class="a t" style="left:1414.98px;top:639.29px;font-size:12px;line-height:16px;color:#23238a;transform:scaleX(1.0029);-webkit-text-stroke:0.3px #23238a;">0</div>
<div class="a cb" style="left:466.7px;top:660.8px;width:17.6px;height:15px;border:1.5px solid #41709a;border-left-width:1.9px;border-radius:1.5px"></div>
<div class="a t" style="left:518.00px;top:661.14px;font-size:12px;line-height:16px;color:#23238a;transform:scaleX(1.0057);-webkit-text-stroke:0.3px #23238a;clip-path:inset(6.5px 0 0 0);">FAP</div>
<div class="a t" style="left:592.93px;top:661.14px;font-size:12px;line-height:16px;color:#23238a;transform:scaleX(1.1707);-webkit-text-stroke:0.3px #23238a;clip-path:inset(6.5px 0 0 0);">000300017287</div>
<div class="a t" style="left:914.54px;top:661.14px;font-size:12px;line-height:16px;color:#23238a;transform:scaleX(1.2125);-webkit-text-stroke:0.3px #23238a;clip-path:inset(6.5px 0 0 0);">-30.172.949</div>
<div class="a t" style="left:1055.34px;top:661.14px;font-size:12px;line-height:16px;color:#23238a;transform:scaleX(1.2125);-webkit-text-stroke:0.3px #23238a;clip-path:inset(6.5px 0 0 0);">-30.172.949</div>
<div class="a t" style="left:1154.67px;top:661.14px;font-size:12px;line-height:16px;color:#23238a;transform:scaleX(1.3126);-webkit-text-stroke:0.3px #23238a;clip-path:inset(6.5px 0 0 0);">01/12/2025</div>
<div class="a t" style="left:1306.10px;top:661.14px;font-size:12px;line-height:16px;color:#23238a;transform:scaleX(1.2584);-webkit-text-stroke:0.3px #23238a;clip-path:inset(6.5px 0 0 0);">0,00</div>
<div class="a t" style="left:1414.98px;top:661.14px;font-size:12px;line-height:16px;color:#23238a;transform:scaleX(1.0029);-webkit-text-stroke:0.3px #23238a;clip-path:inset(6.5px 0 0 0);">0</div>
<div class="a cb" style="left:466.7px;top:682.7px;width:17.6px;height:15px;border:1.5px solid #41709a;border-left-width:1.9px;border-radius:1.5px"></div>
<div class="a t" style="left:517.60px;top:682.99px;font-size:12px;line-height:16px;color:#23238a;transform:scaleX(0.9970);-webkit-text-stroke:0.3px #23238a;">FAC</div>
<div class="a t" style="left:592.94px;top:682.99px;font-size:12px;line-height:16px;color:#23238a;transform:scaleX(1.1705);-webkit-text-stroke:0.3px #23238a;">00000L157942</div>
<div class="a t" style="left:927.46px;top:682.99px;font-size:12px;line-height:16px;color:#23238a;transform:scaleX(1.2128);-webkit-text-stroke:0.3px #23238a;">4.736.633</div>
<div class="a t" style="left:1068.26px;top:682.99px;font-size:12px;line-height:16px;color:#23238a;transform:scaleX(1.2128);-webkit-text-stroke:0.3px #23238a;">4.736.633</div>
<div class="a t" style="left:1154.67px;top:682.99px;font-size:12px;line-height:16px;color:#23238a;transform:scaleX(1.3126);-webkit-text-stroke:0.3px #23238a;">04/12/2025</div>
<div class="a t" style="left:1306.10px;top:682.99px;font-size:12px;line-height:16px;color:#23238a;transform:scaleX(1.2584);-webkit-text-stroke:0.3px #23238a;">0,00</div>
<div class="a t" style="left:1414.98px;top:682.99px;font-size:12px;line-height:16px;color:#23238a;transform:scaleX(1.0029);-webkit-text-stroke:0.3px #23238a;">0</div>
<div class="a" style="left:1553.5px;top:528px;width:23px;height:162px;background:#f6f6f6"></div>
<div class="a" style="left:1553.5px;top:528px;width:23px;height:17px;background:#f0f0f0;border:1px solid #fff;border-right:1.5px solid #6b6b6b;border-bottom:1.5px solid #6b6b6b"></div>
<div class="a" style="left:1560px;top:533px;border:5px solid transparent;border-bottom:6px solid #000;border-top:none"></div>
<div class="a" style="left:1553.5px;top:545.5px;width:23px;height:11px;background:#f0f0f0;border:1px solid #fff;border-right:1.5px solid #6b6b6b;border-bottom:1.5px solid #6b6b6b"></div>
<div class="a" style="left:1576.5px;top:527px;width:1.5px;height:163px;background:#8a8a8a"></div>
<div class="a" style="left:1578px;top:499px;width:8px;height:191px;background:#ececec"></div>
<div class="a grp" style="left:1586px;top:527px;width:340px;height:170px"></div>
<div class="a tab" style="left:1586px;top:499px;width:95px;height:29px;border-radius:10px 10px 0 0"></div>
<div class="a t" style="left:1596.82px;top:506.15px;font-size:14px;line-height:18px;color:#444444;transform:scaleX(1.1818);-webkit-text-stroke:0.25px #444;">Resumen</div>
<div class="a gh" style="left:1588px;top:529px;width:193px;height:20px"></div>
<div class="a gh" style="left:1781px;top:529px;width:134px;height:20px"></div>
<div class="a t" style="left:1659.40px;top:531.97px;font-size:12.5px;line-height:16px;color:#fff;transform:scaleX(1.1794);font-weight:bold;">Detalle</div>
<div class="a t" style="left:1820.30px;top:531.97px;font-size:12.5px;line-height:16px;color:#fff;transform:scaleX(1.2139);font-weight:bold;">Importe</div>
<svg class="a" style="left:456px;top:585px" width="1032" height="85" viewBox="0 0 1032 85"><rect x="4.00" y="3.90" width="1024.30" height="77.40" fill="none" stroke="#4472c4" stroke-width="5.2"/></svg>
</body></html>
